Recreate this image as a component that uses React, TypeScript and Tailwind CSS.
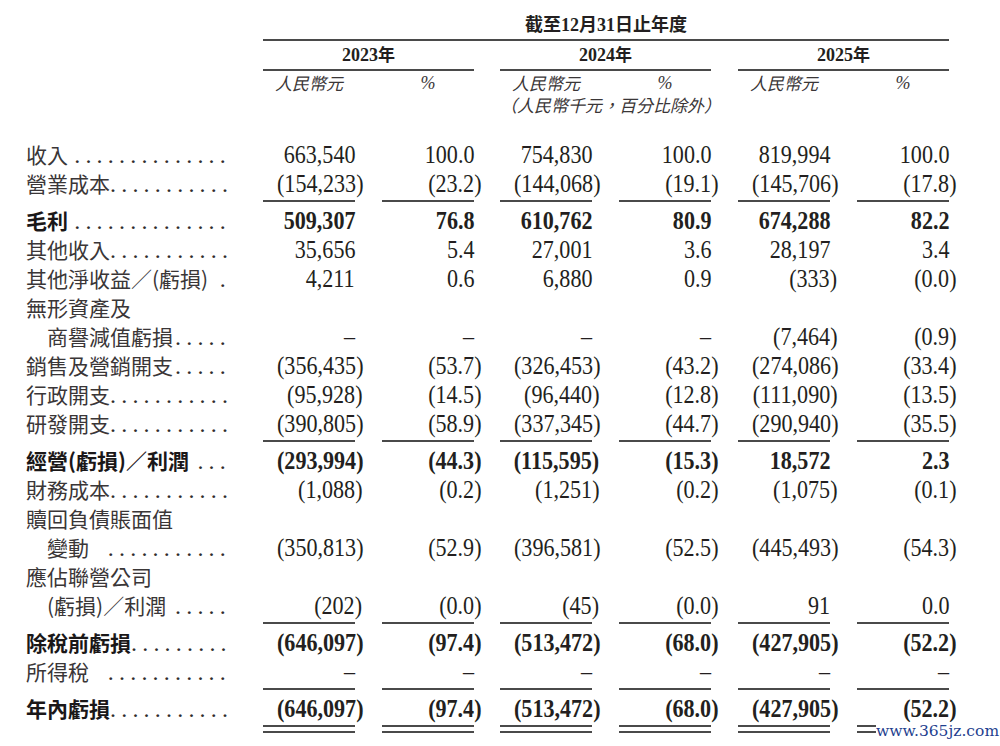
import React from "react";

type DRow = { t: "row"; label: string; vals?: string[]; bold?: boolean; indent?: boolean; dots?: number };
type Row = DRow | { t: "rule" } | { t: "double" };

const D = "–";
const rows: Row[] = [
  { t: "row", label: "收入", dots: 14, vals: ["663,540", "100.0", "754,830", "100.0", "819,994", "100.0"] },
  { t: "row", label: "營業成本", dots: 11, vals: ["(154,233)", "(23.2)", "(144,068)", "(19.1)", "(145,706)", "(17.8)"] },
  { t: "rule" },
  { t: "row", label: "毛利", bold: true, dots: 14, vals: ["509,307", "76.8", "610,762", "80.9", "674,288", "82.2"] },
  { t: "row", label: "其他收入", dots: 11, vals: ["35,656", "5.4", "27,001", "3.6", "28,197", "3.4"] },
  { t: "row", label: "其他淨收益／(虧損)", dots: 1, vals: ["4,211", "0.6", "6,880", "0.9", "(333)", "(0.0)"] },
  { t: "row", label: "無形資產及" },
  { t: "row", label: "商譽減值虧損", indent: true, dots: 5, vals: [D, D, D, D, "(7,464)", "(0.9)"] },
  { t: "row", label: "銷售及營銷開支", dots: 5, vals: ["(356,435)", "(53.7)", "(326,453)", "(43.2)", "(274,086)", "(33.4)"] },
  { t: "row", label: "行政開支", dots: 11, vals: ["(95,928)", "(14.5)", "(96,440)", "(12.8)", "(111,090)", "(13.5)"] },
  { t: "row", label: "研發開支", dots: 11, vals: ["(390,805)", "(58.9)", "(337,345)", "(44.7)", "(290,940)", "(35.5)"] },
  { t: "rule" },
  { t: "row", label: "經營(虧損)／利潤", bold: true, dots: 3, vals: ["(293,994)", "(44.3)", "(115,595)", "(15.3)", "18,572", "2.3"] },
  { t: "row", label: "財務成本", dots: 11, vals: ["(1,088)", "(0.2)", "(1,251)", "(0.2)", "(1,075)", "(0.1)"] },
  { t: "row", label: "贖回負債賬面值" },
  { t: "row", label: "變動", indent: true, dots: 11, vals: ["(350,813)", "(52.9)", "(396,581)", "(52.5)", "(445,493)", "(54.3)"] },
  { t: "row", label: "應佔聯營公司" },
  { t: "row", label: "(虧損)／利潤", indent: true, dots: 5, vals: ["(202)", "(0.0)", "(45)", "(0.0)", "91", "0.0"] },
  { t: "rule" },
  { t: "row", label: "除稅前虧損", bold: true, dots: 9, vals: ["(646,097)", "(97.4)", "(513,472)", "(68.0)", "(427,905)", "(52.2)"] },
  { t: "row", label: "所得稅", dots: 11, vals: [D, D, D, D, D, D] },
  { t: "rule" },
  { t: "row", label: "年內虧損", bold: true, dots: 11, vals: ["(646,097)", "(97.4)", "(513,472)", "(68.0)", "(427,905)", "(52.2)"] },
  { t: "double" },
];

const ML = ["", "ml-[27px]", "ml-[26px]", "ml-[27px]", "ml-[27px]", "ml-[27px]"];

function Num({ v }: { v: string }) {
  const neg = v.startsWith("(") && v.endsWith(")");
  const main = neg ? v.slice(0, -1) : v;
  return (
    <span className="relative inline-block origin-right scale-x-[0.85]">
      {main}
      {neg && <span className="absolute left-full top-0">)</span>}
    </span>
  );
}

function Label({ r }: { r: DRow }) {
  return (
    <div className="ml-[26px] w-[237px] pr-[32px] flex items-baseline justify-between">
      <span
        className={`whitespace-nowrap font-['Noto_Sans_CJK_TC',sans-serif] text-[21px] leading-[29px] ${
          r.indent ? "pl-[21px]" : ""
        } ${r.bold ? "font-bold text-[#1a1718]" : "text-[#3a3637]"}`}
      >
        {r.label}
      </span>
      {r.dots ? (
        <span className="whitespace-nowrap font-['Liberation_Serif',serif] text-[24px] leading-[29px] tracking-[5.2px] text-[#2f2b2c]">
          {".".repeat(r.dots)}
        </span>
      ) : null}
    </div>
  );
}

function DataRow({ r }: { r: DRow }) {
  return (
    <div className="flex h-[29px] items-center">
      <Label r={r} />
      {r.vals && (
        <div className="flex">
          {r.vals.map((v, i) => (
            <div
              key={i}
              className={`w-[92px] ${ML[i]} text-right text-[26px] leading-[29px] font-['Liberation_Serif',serif] ${
                r.bold ? "font-bold" : ""
              }`}
            >
              <Num v={v} />
            </div>
          ))}
        </div>
      )}
    </div>
  );
}

function Rule() {
  return (
    <div className="h-[8px] flex pl-[263px]">
      {ML.map((m, i) => (
        <div key={i} className={`w-[92px] ${m} mt-[2px] h-[1.5px] bg-[#4a4a4a]`} />
      ))}
    </div>
  );
}

function DoubleRule() {
  return (
    <div className="h-[12px] flex pl-[263px]">
      {ML.map((m, i) => (
        <div key={i} className={`w-[92px] ${m} flex flex-col`}>
          <div className="mt-[2px] h-[1.5px] bg-[#4a4a4a]" />
          <div className="mt-[4.5px] h-[1.5px] bg-[#4a4a4a]" />
        </div>
      ))}
    </div>
  );
}

function YearGroup({ year, note, gap }: { year: string; note?: boolean; gap: string }) {
  return (
    <div className={`w-[211px] ${gap} flex flex-col`}>
      <div className="h-[28.5px] text-center leading-[26px] font-bold">
        <span className="font-['Liberation_Serif',serif] text-[18px]">{year}</span>
        <span className="font-['Noto_Sans_CJK_TC',sans-serif] text-[17px]">年</span>
      </div>
      <div className="h-[1.5px] bg-[#4a4a4a]" />
      <div className="flex justify-between h-[24px] leading-[24px] italic text-[#3a3637]">
        <div className="w-[92px] text-center font-['Noto_Sans_CJK_TC',sans-serif] text-[17px]">人民幣元</div>
        <div className="w-[92px] text-center font-['Liberation_Serif',serif] text-[18px]">%</div>
      </div>
      {note && (
        <div className="h-[20px] text-center leading-[20px] italic text-[#3a3637] font-['Noto_Sans_CJK_TC',sans-serif] text-[17px] whitespace-nowrap">
          （人民幣千元，百分比除外）
        </div>
      )}
    </div>
  );
}

export default function App() {
  return (
    <div className="relative w-[1000px] h-[746px] bg-white overflow-hidden text-[#231f20]">
      <div className="h-[140px]">
        <div className="h-[39px] pt-[12px] pl-[263px]">
          <div className="w-[686px] text-center leading-[22px] font-bold font-['Noto_Sans_CJK_TC',sans-serif] text-[18px]">
            截至<span className="font-['Liberation_Serif',serif] text-[18px]">12</span>月
            <span className="font-['Liberation_Serif',serif] text-[18px]">31</span>日止年度
          </div>
        </div>
        <div className="ml-[263px] w-[686px] h-[1.5px] bg-[#4a4a4a]" />
        <div className="flex pl-[263px]">
          <YearGroup year="2023" gap="" />
          <YearGroup year="2024" gap="ml-[26px]" note />
          <YearGroup year="2025" gap="ml-[27px]" />
        </div>
      </div>
      <div className="flex flex-col">
        {rows.map((r, i) =>
          r.t === "row" ? <DataRow key={i} r={r} /> : r.t === "rule" ? <Rule key={i} /> : <DoubleRule key={i} />
        )}
      </div>
      <div className="absolute left-[876px] top-[722px] bg-white pr-[4px] font-['DejaVu_Serif',serif] text-[15.5px] leading-[18px] text-[#1f3f8f]">
        www.365jz.com
      </div>
    </div>
  );
}
